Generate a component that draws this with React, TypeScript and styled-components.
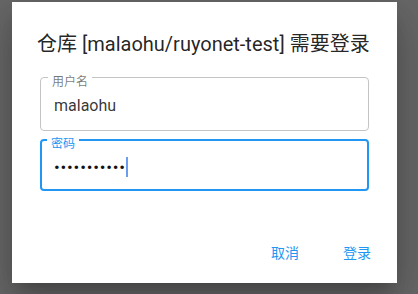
import { FC } from 'react'
import styled, { createGlobalStyle } from 'styled-components'

const GlobalStyle = createGlobalStyle`
  html, body {
    margin: 0;
    padding: 0;
    background: #686868;
    overflow: hidden;
  }
  body {
    font-family: Roboto, 'Noto Sans CJK SC', sans-serif;
  }
`

const Backdrop = styled.div`
  width: 418px;
  height: 294px;
  padding: 2px 0 0 12px;
  box-sizing: border-box;
  background: #686868;
`

const Dialog = styled.div`
  width: 385px;
  height: 281px;
  box-sizing: border-box;
  background: #fff;
  display: flex;
  flex-direction: column;
  box-shadow:
    0 11px 15px -7px rgba(0, 0, 0, 0.2),
    0 24px 38px 3px rgba(0, 0, 0, 0.14),
    0 9px 46px 8px rgba(0, 0, 0, 0.12);
`

const Title = styled.h2`
  margin: 0;
  padding: 28px 24px 0 25px;
  font-size: 20px;
  line-height: 28px;
  font-weight: 400;
  color: rgba(0, 0, 0, 0.87);
  white-space: nowrap;
`

const Fields = styled.div`
  display: flex;
  flex-direction: column;
  gap: 8px;
  padding: 19px 28px 0 28px;
`

const Field = styled.div<{ $focused?: boolean }>`
  position: relative;
  height: ${(p) => (p.$focused ? '52px' : '54px')};
  box-sizing: border-box;
  border: ${(p) => (p.$focused ? '2px solid #2196f3' : '1px solid #c4c4c4')};
  border-radius: 4px;
  display: flex;
  align-items: center;
  padding: 3px 0 0 ${(p) => (p.$focused ? '12px' : '13px')};
`

const Label = styled.span<{ $focused?: boolean }>`
  position: absolute;
  top: ${(p) => (p.$focused ? '-4px' : '-3px')};
  left: ${(p) => (p.$focused ? '5px' : '7px')};
  padding: 0 4px;
  background: #fff;
  font-size: 12px;
  line-height: 14px;
  color: ${(p) => (p.$focused ? '#2196f3' : 'rgba(0, 0, 0, 0.54)')};
`

const Value = styled.span`
  font-size: 16px;
  line-height: 20px;
  color: rgba(0, 0, 0, 0.8);
`

const Dots = styled.span`
  font-size: 17px;
  line-height: 20px;
  letter-spacing: 0.8px;
  color: #111;
`

const Caret = styled.span`
  display: inline-block;
  width: 2px;
  height: 20px;
  margin-left: 0;
  background: #6b9cf0;
`

const Actions = styled.div`
  margin-top: auto;
  display: flex;
  justify-content: flex-end;
  gap: 8px;
  padding: 0 8px 13px 8px;
`

const TextButton = styled.button`
  min-width: 64px;
  height: 36px;
  padding: 6px 8px;
  border: 0;
  background: transparent;
  font-family: inherit;
  font-size: 14px;
  color: #2196f3;
  cursor: pointer;
`

const App: FC = () => {
  return (
    <>
      <GlobalStyle />
      <Backdrop>
        <Dialog>
          <Title>仓库 [malaohu/ruyonet-test] 需要登录</Title>
          <Fields>
            <Field>
              <Label>用户名</Label>
              <Value>malaohu</Value>
            </Field>
            <Field $focused>
              <Label $focused>密码</Label>
              <Dots>{'•••••••••••'}</Dots>
              <Caret />
            </Field>
          </Fields>
          <Actions>
            <TextButton>取消</TextButton>
            <TextButton>登录</TextButton>
          </Actions>
        </Dialog>
      </Backdrop>
    </>
  )
}

export default App
